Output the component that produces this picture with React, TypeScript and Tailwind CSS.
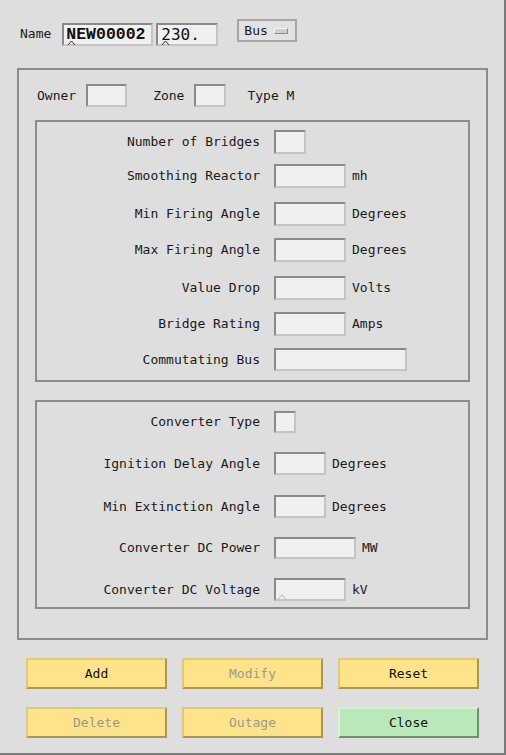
import React from "react";

const mono = "font-['DejaVu_Sans_Mono',monospace]";

function Field({ w, h = "h-[24px]", caret }: { w: string; h?: string; caret?: boolean }) {
  return (
    <div
      className={`relative ${w} ${h} bg-[#f0f0f0] border-2 border-t-[#8a8a8a] border-l-[#8a8a8a] border-b-[#c4c4c4] border-r-[#c4c4c4]`}
    >
      {caret && (
        <svg className="absolute left-[1px] bottom-[0px]" width="10" height="5" viewBox="0 0 10 5">
          <polyline points="1,5 5,1 9,5" fill="none" stroke="#c8c8c8" strokeWidth="1.2" />
        </svg>
      )}
    </div>
  );
}

type Row = { label: string; w: string; h?: string; unit?: string; mt: string; caret?: boolean };

const bridgeRows: Row[] = [
  { label: "Number of Bridges", w: "w-[32px]", mt: "mt-[8px]" },
  { label: "Smoothing Reactor", w: "w-[72px]", unit: "mh", mt: "mt-[10px]" },
  { label: "Min Firing Angle", w: "w-[72px]", unit: "Degrees", mt: "mt-[14px]" },
  { label: "Max Firing Angle", w: "w-[72px]", unit: "Degrees", mt: "mt-[12px]" },
  { label: "Value Drop", w: "w-[72px]", unit: "Volts", mt: "mt-[14px]" },
  { label: "Bridge Rating", w: "w-[72px]", unit: "Amps", mt: "mt-[12px]" },
  { label: "Commutating Bus", w: "w-[133px]", h: "h-[23px]", mt: "mt-[12px]" },
];

const converterRows: Row[] = [
  { label: "Converter Type", w: "w-[22px]", h: "h-[22px]", mt: "mt-[9px]" },
  { label: "Ignition Delay Angle", w: "w-[52px]", h: "h-[23px]", unit: "Degrees", mt: "mt-[19px]" },
  { label: "Min Extinction Angle", w: "w-[52px]", h: "h-[23px]", unit: "Degrees", mt: "mt-[20px]" },
  { label: "Converter DC Power", w: "w-[82px]", h: "h-[22px]", unit: "MW", mt: "mt-[19px]" },
  { label: "Converter DC Voltage", w: "w-[72px]", h: "h-[23px]", unit: "kV", mt: "mt-[19px]", caret: true },
];

function FormRow({ r }: { r: Row }) {
  return (
    <div className={`flex items-center ${r.mt}`}>
      <div className="w-[237px] shrink-0 pr-[14px] text-right text-[13px] leading-[16px] text-[#1a1a1a]">{r.label}</div>
      <Field w={r.w} h={r.h} caret={r.caret} />
      {r.unit && <div className="ml-[6px] text-[13px] leading-[16px] text-[#1a1a1a]">{r.unit}</div>}
    </div>
  );
}

function Btn({ label, disabled, green }: { label: string; disabled?: boolean; green?: boolean }) {
  const color = green
    ? "bg-[#b9e8bb] border-t-[#d4f2d5] border-l-[#d4f2d5] border-b-[#6f8f70] border-r-[#6f8f70]"
    : "bg-[#ffe38b] border-t-[#e0c879] border-l-[#e0c879] border-b-[#a8975a] border-r-[#a8975a]";
  return (
    <button
      className={`w-[141px] h-[31px] border-2 ${color} text-[13px] ${disabled ? "text-[#9a9a8a]" : "text-[#111]"}`}
    >
      {label}
    </button>
  );
}

export default function App() {
  return (
    <div className={`w-[506px] h-[755px] bg-[#dedede] border-r-2 border-b-2 border-r-[#7a7a7a] border-b-[#7a7a7a] ${mono} overflow-hidden`}>
      {/* top line */}
      <div className="flex items-start pt-[19px]">
        <div className="ml-[20px] mt-[7px] text-[13px] leading-[16px] text-[#1a1a1a]">Name</div>
        <div className="relative ml-[11px] mt-[4px] w-[91px] h-[23px] bg-[#f0f0f0] border-2 border-t-[#8a8a8a] border-l-[#8a8a8a] border-b-[#c4c4c4] border-r-[#c4c4c4] flex items-center pl-[2px]">
          <span className="font-['Liberation_Mono',monospace] font-bold text-[16.5px] leading-[19px] text-[#111]">NEW00002</span>
          <svg className="absolute left-[3px] bottom-[-1px]" width="9" height="5" viewBox="0 0 9 5">
            <polyline points="1,5 4.5,1 8,5" fill="none" stroke="#333" strokeWidth="1" />
          </svg>
        </div>
        <div className="relative ml-[3px] mt-[4px] w-[62px] h-[23px] bg-[#f0f0f0] border-2 border-t-[#8a8a8a] border-l-[#8a8a8a] border-b-[#c4c4c4] border-r-[#c4c4c4] flex items-center pl-[3px]">
          <span className="text-[16px] leading-[19px] text-[#111]">230.</span>
          <svg className="absolute left-[3px] bottom-[-1px]" width="9" height="5" viewBox="0 0 9 5">
            <polyline points="1,5 4.5,1 8,5" fill="none" stroke="#333" strokeWidth="1" />
          </svg>
        </div>
        <div className="ml-[19px] w-[60px] h-[23px] border-2 border-[#a6a6a6] bg-[#e2e2e2] flex items-center pl-[5px] gap-[6px]">
          <span className="text-[13px] leading-[16px] text-[#1a1a1a]">Bus</span>
          <div className="w-[14px] h-[6px] border border-t-[#f4f4f4] border-l-[#f4f4f4] border-b-[#8a8a8a] border-r-[#8a8a8a] bg-[#cfcfcf]" />
        </div>
      </div>

      {/* main panel */}
      <div className="ml-[17px] mt-[22px] w-[471px] h-[572px] border-2 border-[#8c8c8c]">
        <div className="flex items-center mt-[14px]">
          <div className="ml-[18px] text-[13px] leading-[16px] text-[#1a1a1a]">Owner</div>
          <div className="ml-[10px]">
            <Field w="w-[41px]" h="h-[23px]" />
          </div>
          <div className="ml-[26px] text-[13px] leading-[16px] text-[#1a1a1a]">Zone</div>
          <div className="ml-[10px]">
            <Field w="w-[32px]" h="h-[23px]" />
          </div>
          <div className="ml-[21px] text-[13px] leading-[16px] text-[#1a1a1a]">Type M</div>
        </div>

        <div className="ml-[16px] mt-[13px] w-[435px] h-[262px] border-2 border-[#8c8c8c]">
          {bridgeRows.map((r) => (
            <FormRow key={r.label} r={r} />
          ))}
        </div>

        <div className="ml-[16px] mt-[18px] w-[435px] h-[209px] border-2 border-[#8c8c8c]">
          {converterRows.map((r) => (
            <FormRow key={r.label} r={r} />
          ))}
        </div>
      </div>

      {/* buttons */}
      <div className="flex ml-[26px] mt-[18px] gap-[15px]">
        <Btn label="Add" />
        <Btn label="Modify" disabled />
        <Btn label="Reset" />
      </div>
      <div className="flex ml-[26px] mt-[18px] gap-[15px]">
        <Btn label="Delete" disabled />
        <Btn label="Outage" disabled />
        <Btn label="Close" green />
      </div>
    </div>
  );
}
